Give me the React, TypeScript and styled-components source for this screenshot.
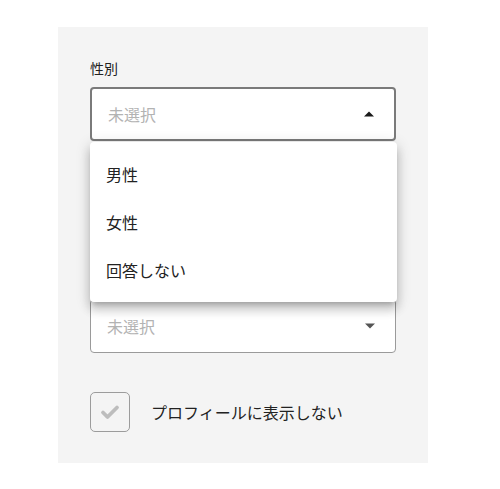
import React from 'react';
import styled, { createGlobalStyle } from 'styled-components';

const GlobalStyle = createGlobalStyle`
  body {
    margin: 0;
    background: #ffffff;
    font-family: "Noto Sans CJK JP", "Noto Sans", sans-serif;
    color: #222222;
  }
`;

const Page = styled.div`
  padding: 27px 0 0 58px;
`;

const Panel = styled.div`
  width: 306px;
  padding: 32px 32px 31px;
  background: #f4f4f4;
  display: flex;
  flex-direction: column;
  gap: 24px;
`;

const Field = styled.div<{ pushed?: boolean }>`
  position: relative;
  display: flex;
  flex-direction: column;
  gap: 10px;
  margin-top: ${({ pushed }) => (pushed ? '134px' : '0')};
`;

const Label = styled.div`
  font-size: 14px;
  line-height: 18px;
  color: #222222;
`;

const SelectBox = styled.div<{ open?: boolean }>`
  box-sizing: border-box;
  height: 54px;
  display: flex;
  align-items: center;
  justify-content: space-between;
  padding: 0 13px 0 16px;
  background: #ffffff;
  border: ${({ open }) => (open ? '2px solid #7a7a7a' : '1px solid #9a9a9a')};
  border-radius: 4px;
`;

const Placeholder = styled.span`
  font-size: 16px;
  color: #b3b3b3;
`;

const Menu = styled.ul`
  position: absolute;
  top: 83px;
  left: 0;
  right: -1px;
  margin: 0;
  padding: 8px 0;
  list-style: none;
  background: #ffffff;
  border-radius: 4px;
  box-shadow: 0 5px 5px -3px rgba(0, 0, 0, 0.2), 0 8px 10px 1px rgba(0, 0, 0, 0.14),
    0 3px 14px 2px rgba(0, 0, 0, 0.12);
  z-index: 2;
`;

const MenuItem = styled.li`
  height: 48px;
  display: flex;
  align-items: center;
  padding: 0 16px;
  font-size: 16px;
  color: #222222;
`;

const CheckRow = styled.label`
  display: flex;
  align-items: center;
  gap: 21px;
  margin-top: 15px;
  font-size: 16px;
  color: #222222;
`;

const CheckBox = styled.span`
  box-sizing: border-box;
  width: 40px;
  height: 40px;
  display: flex;
  align-items: center;
  justify-content: center;
  border: 1px solid #9c9c9c;
  border-radius: 5px;
  background: #f4f4f4;
`;

const Caret = ({ up, color }: { up?: boolean; color: string }) => (
  <svg width="24" height="24" viewBox="0 0 24 24">
    <path d={up ? 'M7 14.5l5-5 5 5z' : 'M7 9.5l5 5 5-5z'} fill={color} />
  </svg>
);

const Check = () => (
  <svg width="24" height="24" viewBox="0 0 24 24">
    <path
      d="M5 12.5l4.5 4.5L19 7.5"
      fill="none"
      stroke="#bdbdbd"
      strokeWidth="3.8"
      strokeLinecap="round"
      strokeLinejoin="round"
    />
  </svg>
);

const options = ['男性', '女性', '回答しない'];

const App: React.FC = () => (
  <Page>
    <GlobalStyle />
    <Panel>
      <Field>
        <Label>性別</Label>
        <SelectBox open>
          <Placeholder>未選択</Placeholder>
          <Caret up color="#1a1a1a" />
        </SelectBox>
        <Menu>
          {options.map((o) => (
            <MenuItem key={o}>{o}</MenuItem>
          ))}
        </Menu>
      </Field>
      <Field pushed>
        <SelectBox>
          <Placeholder>未選択</Placeholder>
          <Caret color="#555555" />
        </SelectBox>
      </Field>
      <CheckRow>
        <CheckBox>
          <Check />
        </CheckBox>
        プロフィールに表示しない
      </CheckRow>
    </Panel>
  </Page>
);

export default App;
